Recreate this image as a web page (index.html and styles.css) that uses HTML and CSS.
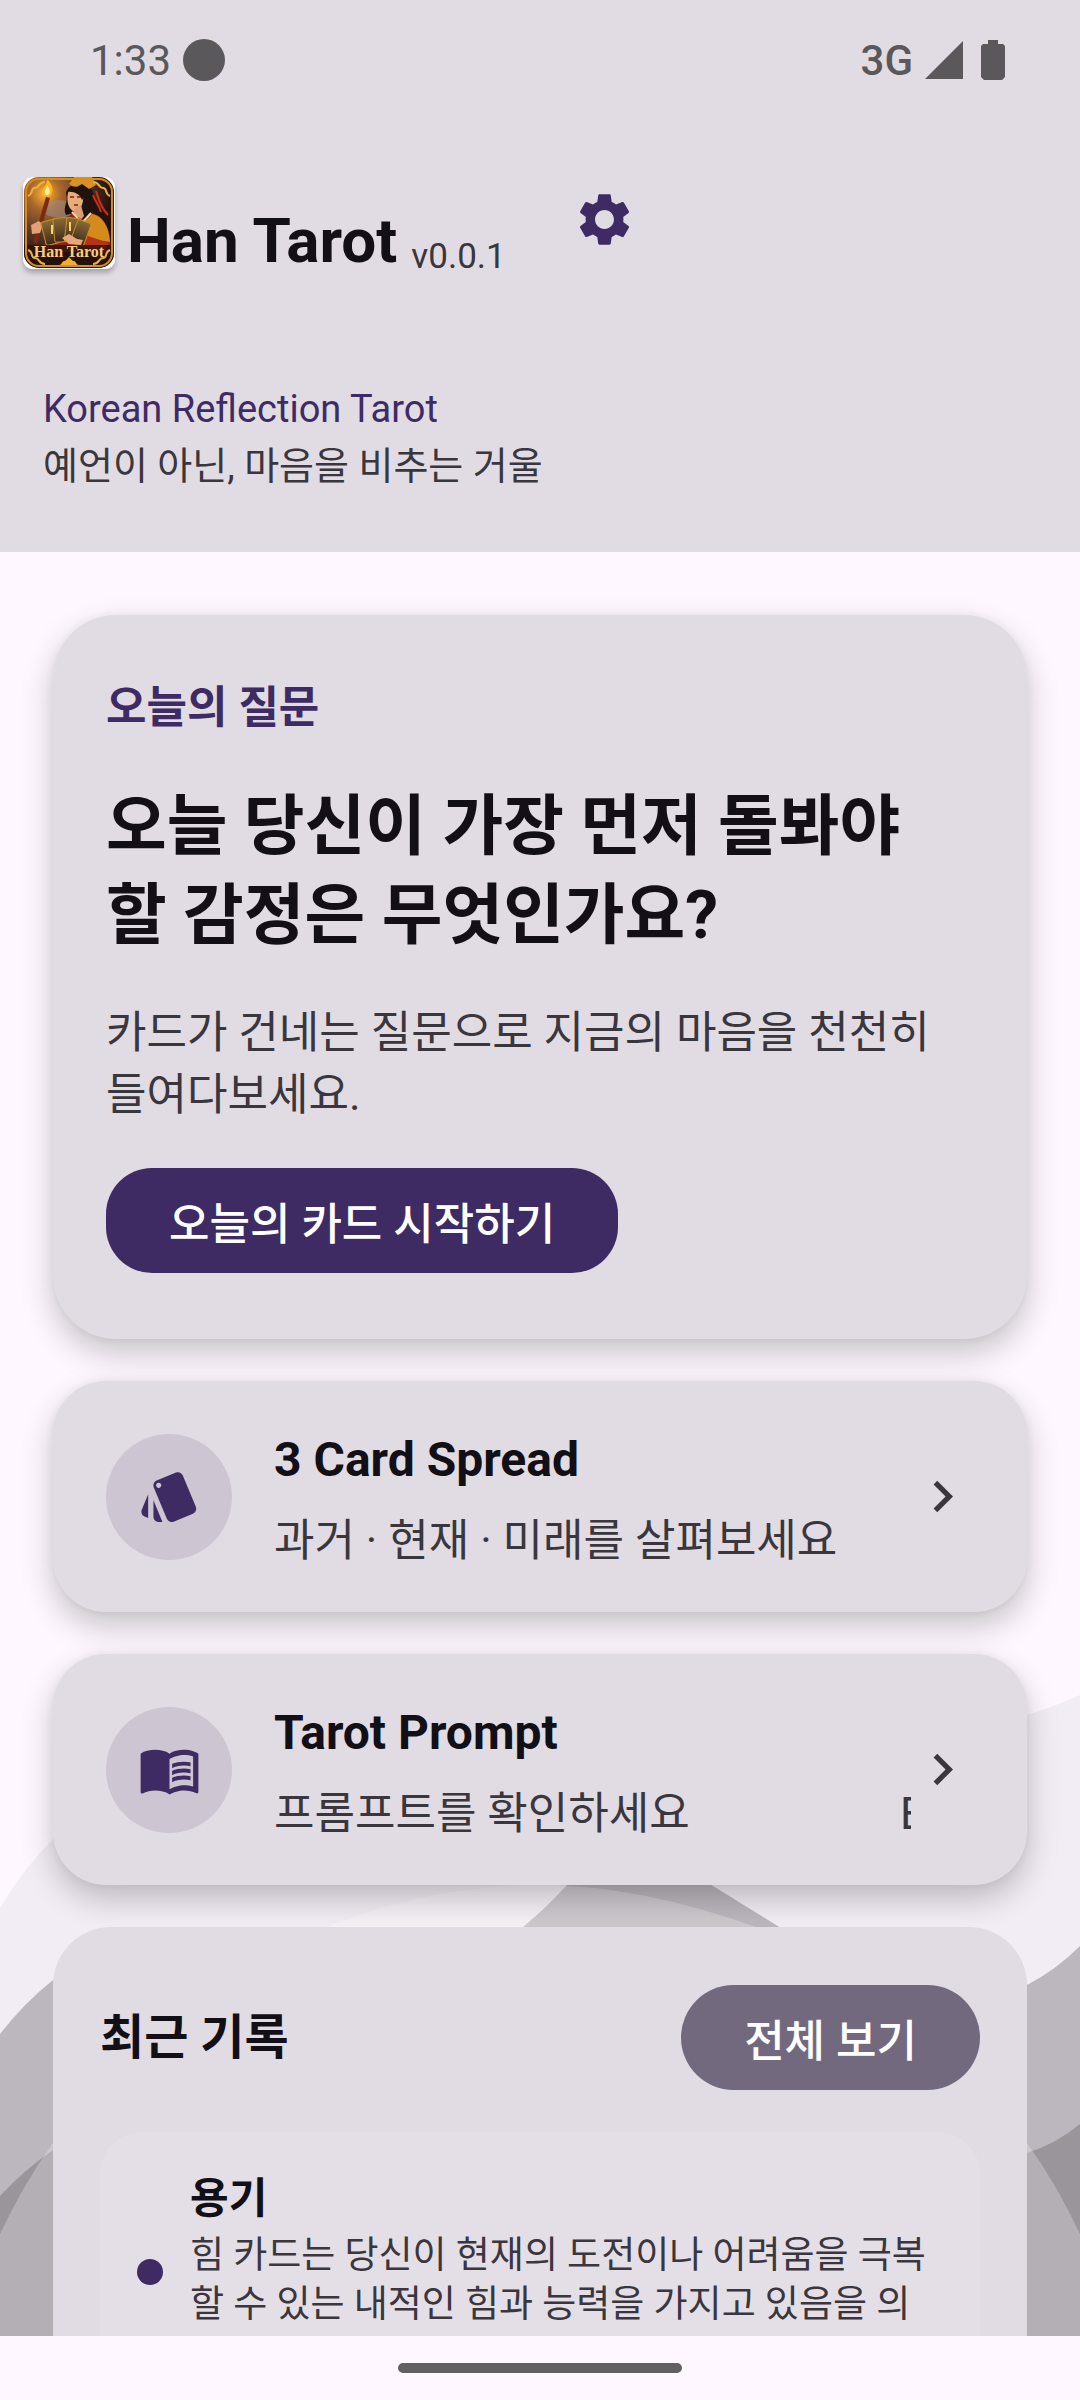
FILE: index.html
```html
<!DOCTYPE html>
<html lang="ko">
<head>
    <meta charset="UTF-8">
    <meta name="viewport" content="width=device-width, initial-scale=1.0">
    <title>Han Tarot</title>
    <link rel="stylesheet" href="styles.css">
</head>
<body>
    <header class="app-header">
        <div class="status-bar">
            <div class="status-left">
                <span>1:33</span>
                <span class="status-dot"></span>
            </div>
            <div class="status-right">
                <span class="network">3G</span>
                <svg class="signal" viewBox="0 0 38 38"><path d="M38 0v38H0z"/></svg>
                <svg class="battery" viewBox="0 0 24 40"><path d="M7 0h10v4h5l2 2v31l-3 3H3l-3-3V6l2-2h5z"/></svg>
            </div>
        </div>
        <div class="brand">
            <svg class="app-icon" viewBox="0 0 92 92" role="img" aria-label="Han Tarot">
                <defs>
                    <radialGradient id="glow" cx="24%" cy="18%" r="70%">
                        <stop offset="0" stop-color="#ffb52e"/>
                        <stop offset="0.25" stop-color="#a9662c"/>
                        <stop offset="0.6" stop-color="#5b3a2b"/>
                        <stop offset="1" stop-color="#2a120c"/>
                    </radialGradient>
                    <linearGradient id="card" x1="0" y1="0" x2="0" y2="1">
                        <stop offset="0" stop-color="#8d6a33"/>
                        <stop offset="1" stop-color="#3a2a1e"/>
                    </linearGradient>
                    <clipPath id="frame"><rect x="1" width="90" height="91" rx="15"/></clipPath>
                </defs>
                <rect width="92" height="92" rx="9" fill="#fff"/>
                <g clip-path="url(#frame)">
                    <rect width="92" height="92" fill="url(#glow)"/>
                    <ellipse cx="36" cy="32" rx="16" ry="9" fill="#a08c80" opacity="0.6"/>
                    <!-- hair, crown, face -->
                    <path d="M43 16c3-12 24-14 28 2 2 10 12 17 16 33l-22-6-14-9-8 2c-4-8 3-12 0-22z" fill="#21110f"/>
                    <path d="M46 7l5-7h18l4 8-7 4-7-5-7 4z" fill="#d8921d"/>
                    <path d="M45 16c2-6 14-7 15 2 1 8-2 15-8 17-6-2-9-10-7-19z" fill="#e7ad7c"/>
                    <path d="M44 15c2-8 16-8 18 4l-3 4c-2-6-8-9-15-8z" fill="#21110f"/>
                    <path d="M47 20h4M54 20h4M51 28h4" stroke="#6d2518" stroke-width="1.5"/>
                    <path d="M50 33l8-5 3 11-6 7z" fill="#dc9e6e"/>
                    <path d="M73 14c3 8 3 14 12 24M70 18c2 7 6 9 8 17" fill="none" stroke="#d02c1a" stroke-width="2"/>
                    <!-- robe -->
                    <path d="M49 36l11 7 9-7c13 4 19 16 19 39H22c-4-9 3-13 8-17z" fill="#8f2414"/>
                    <path d="M69 37c11 2 17 13 18 28l-20-3-9-13z" fill="#d48b1c"/>
                    <path d="M49 35l10 11 9-10" fill="none" stroke="#f0d9bd" stroke-width="2"/>
                    <path d="M62 58l24 8-5 10-22-8z" fill="#b63316"/>
                    <!-- torch -->
                    <path d="M23 20l4 1L14 67l-4-2z" fill="#7c2a12"/>
                    <path d="M20 18c-4-6 4-7 4-16 6 6 8 13 2 18z" fill="#ffb321"/>
                    <path d="M23 18c-3-4 1-6 1-10 3 4 4 8 1 10z" fill="#fff2a3"/>
                    <path d="M8 48l8-4 4 4-3 8-8 1z" fill="#e2a273"/>
                    <!-- fanned cards -->
                    <g fill="url(#card)" stroke="#c98f2d">
                        <rect x="23" y="43" width="14" height="24" rx="2" transform="rotate(-14 30 66)"/>
                        <rect x="32" y="41" width="14" height="24" rx="2" transform="rotate(-5 38 66)"/>
                        <rect x="41" y="41" width="14" height="24" rx="2" transform="rotate(7 48 66)"/>
                        <rect x="47" y="43" width="14" height="24" rx="2" transform="rotate(20 54 66)"/>
                    </g>
                    <path d="M29 48v9M47 45v9" stroke="#ffd05e" stroke-width="2"/>
                    <path d="M39 61l7-4 8 5 6 1-2 5-12-1z" fill="#e5a878"/>
                    <rect y="68" width="92" height="24" fill="#26100a" opacity="0.75"/>
                </g>
                <rect x="3" y="2" width="86" height="87" rx="13" fill="none" stroke="#d38e1c" stroke-width="2"/>
                <g fill="none" stroke="#edb33a" stroke-width="2">
                    <path d="M5 19c6-2 2-8 7-8s3-6 10-6M87 19c-6-2-2-8-7-8s-3-6-10-6"/>
                    <path d="M5 73c6 2 2 8 7 8s3 6 10 6M87 73c-6 2-2 8-7 8s-3 6-10 6"/>
                </g>
                <path d="M36 88c3 0 3-4 5-4s3-2 5-4c2 2 3 4 5 4s2 4 5 4z" fill="#f0ad32"/>
                <text class="icon-text" x="46" y="80" text-anchor="middle">Han Tarot</text>
            </svg>
            <h1>Han Tarot</h1>
            <span class="version">v0.0.1</span>
            <button class="settings" type="button" aria-label="Settings">
                <svg viewBox="0 0 24 24"><path d="M19.14 12.94c.04-.3.06-.61.06-.94 0-.32-.02-.64-.07-.94l2.03-1.58c.18-.14.23-.41.12-.61l-1.92-3.32c-.12-.22-.37-.29-.59-.22l-2.39.96c-.5-.38-1.03-.7-1.62-.94l-.36-2.54c-.04-.24-.24-.41-.48-.41h-3.84c-.24 0-.43.17-.47.41l-.36 2.54c-.59.24-1.13.57-1.62.94l-2.39-.96c-.22-.08-.47 0-.59.22L2.74 8.87c-.12.21-.08.47.12.61l2.03 1.58c-.05.3-.09.63-.09.94s.02.64.07.94l-2.03 1.58c-.18.14-.23.41-.12.61l1.92 3.32c.12.22.37.29.59.22l2.39-.96c.5.38 1.03.7 1.62.94l.36 2.54c.05.24.24.41.48.41h3.84c.24 0 .44-.17.47-.41l.36-2.54c.59-.24 1.13-.56 1.62-.94l2.39.96c.22.08.47 0 .59-.22l1.92-3.32c.12-.22.07-.47-.12-.61l-2.01-1.58zM12 15.6c-1.98 0-3.6-1.62-3.6-3.6s1.62-3.6 3.6-3.6 3.6 1.62 3.6 3.6-1.62 3.6-3.6 3.6z"/></svg>
            </button>
        </div>
        <div class="tagline">
            <p class="tagline-en">Korean Reflection Tarot</p>
            <p>예언이 아닌, 마음을 비추는 거울</p>
        </div>
    </header>

    <main>
        <!-- misty hills behind the cards -->
        <svg class="hills" viewBox="0 0 1080 800" preserveAspectRatio="none" aria-hidden="true">
            <path fill="#f2ecf4" d="M0 372Q24 332 53 303C300 90 640 330 1027 179Q1056 170 1080 159V800H0z"/>
            <path fill="#bcb6be" d="M0 498Q24 467 53 444C200 400 420 490 522 392Q548 370 566 350L620 300 713 350 781 392C860 440 920 490 1027 449Q1056 434 1080 410V800H0z"/>
            <path fill="#9a949b" d="M0 660Q24 634 53 614L200 560 620 620 1027 617Q1056 608 1080 588V800H0z"/>
            <path fill="#fff" opacity="0.25" d="M0 698Q24 647 53 607Q180 450 324 392Q430 349 540 349Q640 349 759 392Q900 450 1027 607Q1056 647 1080 698V800H0z"/>
        </svg>

        <section class="card question">
            <h2>오늘의 질문</h2>
            <p class="question-text">오늘 당신이 가장 먼저 돌봐야 할 감정은 무엇인가요?</p>
            <p class="question-desc">카드가 건네는 질문으로 지금의 마음을 천천히 들여다보세요.</p>
            <button class="btn" type="button">오늘의 카드 시작하기</button>
        </section>

        <a class="card menu" href="#spread">
            <span class="menu-icon">
                <svg viewBox="0 0 24 24"><path d="M2.53 19.65l1.34.56v-9.03l-2.43 5.86c-.41 1.02.08 2.19 1.09 2.61zm19.5-3.7L17.07 3.98c-.31-.75-1.04-1.21-1.81-1.23-.26 0-.53.04-.79.15L7.1 5.95c-.75.31-1.21 1.03-1.23 1.8-.01.27.04.54.15.8l4.96 11.97c.31.76 1.05 1.22 1.83 1.23.26 0 .52-.05.77-.15l7.36-3.05c1.02-.42 1.51-1.59 1.09-2.6zM7.88 8.75c-.55 0-1-.45-1-1s.45-1 1-1 1 .45 1 1-.45 1-1 1zm-2 11c0 1.1.9 2 2 2h1.45l-3.45-8.34v6.34z"/></svg>
            </span>
            <span class="menu-body">
                <strong>3 Card Spread</strong>
                <span class="menu-desc">과거 · 현재 · 미래를 살펴보세요</span>
            </span>
            <svg class="chevron" viewBox="0 0 24 24"><path d="M8.59 16.59L13.17 12 8.59 7.41 10 6l6 6-6 6z"/></svg>
        </a>

        <a class="card menu" href="#prompt">
            <span class="menu-icon">
                <svg viewBox="0 0 24 24"><path fill-rule="evenodd" d="M21 5c-1.11-.35-2.33-.5-3.5-.5-1.95 0-4.05.4-5.5 1.5-1.45-1.1-3.55-1.5-5.5-1.5S2.45 4.9 1 6v14.65c0 .25.25.5.5.5.1 0 .15-.05.25-.05C3.1 20.45 5.05 20 6.5 20c1.95 0 4.05.4 5.5 1.5 1.35-.85 3.8-1.5 5.5-1.5 1.65 0 3.35.3 4.75 1.05.1.05.15.05.25.05.25 0 .5-.25.5-.5V6c-.6-.45-1.25-.75-2-1zm0 13.5c-1.1-.35-2.3-.5-3.5-.5-1.7 0-4.15.65-5.5 1.5V8c1.35-.85 3.8-1.5 5.5-1.5 1.2 0 2.4.15 3.5.5v11.5z"/><path d="M17.5 10.5c.88 0 1.73.09 2.5.26V9.24c-.79-.15-1.64-.24-2.5-.24-1.7 0-3.24.29-4.5.83v1.66c1.13-.64 2.7-.99 4.5-.99zM13 12.49v1.66c1.13-.64 2.7-.99 4.5-.99.88 0 1.73.09 2.5.26V11.9c-.79-.15-1.64-.24-2.5-.24-1.7 0-3.24.3-4.5.83zM17.5 14.33c-1.7 0-3.24.29-4.5.83v1.66c1.13-.64 2.7-.99 4.5-.99.88 0 1.73.09 2.5.26v-1.52c-.79-.16-1.64-.24-2.5-.24z"/></svg>
            </span>
            <span class="menu-body">
                <strong>Tarot Prompt</strong>
                <span class="menu-desc marquee"><span>프롬프트를 확인하세요</span><span>E</span></span>
            </span>
            <svg class="chevron" viewBox="0 0 24 24"><path d="M8.59 16.59L13.17 12 8.59 7.41 10 6l6 6-6 6z"/></svg>
        </a>

        <section class="records">
            <div class="records-head">
                <h2>최근 기록</h2>
                <button class="btn btn-muted" type="button">전체 보기</button>
            </div>
            <article class="record">
                <span class="record-dot"></span>
                <div>
                    <h3>용기</h3>
                    <p>힘 카드는 당신이 현재의 도전이나 어려움을 극복할 수 있는 내적인 힘과 능력을 가지고 있음을 의</p>
                </div>
            </article>
        </section>
    </main>

    <nav class="gesture-bar"><span class="handle"></span></nav>
</body>
</html>
```
FILE: styles.css
```css
* {
    box-sizing: border-box;
}
body {
    margin: 0;
    height: 100vh;
    display: flex;
    flex-direction: column;
    font-family: Roboto, "Noto Sans CJK KR", sans-serif;
    background-color: #fef7ff;
    color: #120f16;
}
h1, h2, h3, p {
    margin: 0;
}
button {
    border: 0;
    padding: 0;
    font-family: inherit;
    cursor: pointer;
}

/* header */
.app-header {
    flex: none;
    background-color: #e1dce3;
    padding-bottom: 57px;
}
.status-bar {
    display: flex;
    justify-content: space-between;
    align-items: center;
    height: 120px;
    padding: 0 75px 0 90px;
    font-size: 42px;
    color: #5a585b;
}
.status-left, .status-right {
    display: flex;
    align-items: center;
    gap: 12px;
}
.status-dot {
    width: 42px;
    height: 42px;
    border-radius: 50%;
    background-color: #5a585b;
}
.network {
    font-weight: 500;
}
.signal {
    width: 38px;
    height: 38px;
    fill: #5a585b;
}
.battery {
    width: 24px;
    height: 40px;
    margin-left: 6px;
    fill: #5a585b;
}
.brand {
    display: flex;
    align-items: flex-end;
    margin-top: 57px;
    padding-left: 23px;
}
.app-icon {
    width: 92px;
    height: 92px;
    border-radius: 9px;
    box-shadow: 0 4px 5px rgba(0, 0, 0, 0.25);
}
.icon-text {
    font-family: "Liberation Serif", serif;
    font-size: 16px;
    font-weight: bold;
    fill: #f6cf7e;
}
.brand h1 {
    margin-left: 12px;
    font-size: 62px;
    line-height: 56px;
}
.version {
    margin-left: 14px;
    font-size: 35px;
    line-height: 24px;
    color: #3a363e;
}
.settings {
    align-self: flex-start;
    width: 126px;
    height: 85px;
    margin-left: 36px;
    background: none;
}
.settings svg {
    display: block;
    width: 63px;
    height: 63px;
    margin: 0 auto;
    fill: #3f2b63;
}
.tagline {
    margin-top: 112px;
    padding-left: 43px;
    font-size: 38px;
    line-height: 57px;
    color: #3a363e;
}
.tagline-en {
    color: #3f2b63;
}

/* content */
main {
    flex: 1;
    min-height: 0;
    position: relative;
    overflow: hidden;
    display: flex;
    flex-direction: column;
    gap: 42px;
    padding: 63px 53px 0;
}
main > * {
    flex: none;
}
.hills {
    position: absolute;
    left: 0;
    bottom: 0;
    width: 100%;
    height: 800px;
}
.card {
    position: relative;
    background-color: #e1dce3;
    border-radius: 53px;
    box-shadow: 0 14px 32px rgba(0, 0, 0, 0.22), 0 0 8px rgba(0, 0, 0, 0.05);
}
.question {
    padding: 62px 53px 66px;
    border-radius: 63px;
}
.question h2 {
    font-size: 44px;
    font-weight: 600;
    line-height: 63px;
    color: #3f2b63;
}
.question-text {
    margin-top: 42px;
    font-size: 66px;
    font-weight: bold;
    line-height: 89px;
}
.question-desc {
    margin-top: 42px;
    font-size: 44px;
    line-height: 62px;
    color: #3a363e;
}
.btn {
    height: 105px;
    padding: 0 63px;
    border-radius: 46px;
    background-color: #3f2b63;
    color: #fff;
    font-size: 44px;
    font-weight: 500;
}
.question .btn {
    display: block;
    margin-top: 42px;
}
.menu {
    display: flex;
    align-items: center;
    padding: 42px 53px;
    color: inherit;
    text-decoration: none;
}
.menu-icon {
    flex: none;
    display: flex;
    align-items: center;
    justify-content: center;
    width: 126px;
    height: 126px;
    border-radius: 50%;
    background-color: #cdc6d2;
}
.menu-icon svg {
    width: 63px;
    height: 63px;
    fill: #3f2b63;
}
.menu-body {
    flex: 1;
    min-width: 0;
    margin-left: 42px;
    padding-top: 6px;
}
.menu-body strong {
    display: block;
    font-size: 48px;
    line-height: 62px;
}
.menu-desc {
    display: block;
    margin-top: 22px;
    font-size: 44px;
    line-height: 57px;
    white-space: nowrap;
    color: #3a363e;
}
.marquee {
    display: flex;
    justify-content: space-between;
    overflow: hidden;
}
.marquee span:last-child {
    width: 11px;
}
.chevron {
    flex: none;
    width: 63px;
    height: 63px;
    fill: #3a363e;
}
.records {
    position: relative;
    padding: 58px 47px;
    border-radius: 58px;
    background-color: #e1dce3;
}
.records-head {
    display: flex;
    justify-content: space-between;
    align-items: center;
}
.records-head h2 {
    font-size: 48px;
    line-height: 63px;
}
.btn-muted {
    border-radius: 53px;
    background-color: #72697f;
}
.record {
    display: flex;
    align-items: center;
    gap: 27px;
    margin-top: 42px;
    padding: 34px 37px;
    border-radius: 42px;
    background-color: #e4dfe6;
}
.record-dot {
    flex: none;
    width: 26px;
    height: 26px;
    border-radius: 50%;
    background-color: #3f2b63;
}
.record h3 {
    font-size: 42px;
    font-weight: 600;
    line-height: 65px;
}
/* room for a three-line preview */
.record p {
    min-height: 147px;
    font-size: 37px;
    line-height: 49px;
    color: #3a363e;
    word-break: break-all;
}

/* system navigation */
.gesture-bar {
    flex: none;
    display: flex;
    justify-content: center;
    align-items: center;
    height: 64px;
}
.handle {
    width: 284px;
    height: 10px;
    border-radius: 5px;
    background-color: #646165;
}
```
